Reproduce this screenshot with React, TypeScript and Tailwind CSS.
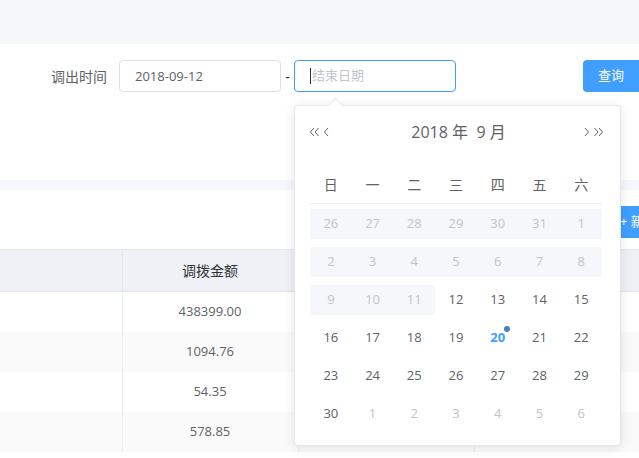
import React from "react";

const font = { fontFamily: '"Open Sans", "Noto Sans CJK SC", sans-serif' };

const weeks = ["日", "一", "二", "三", "四", "五", "六"];

type Day = { n: number; other?: boolean; past?: boolean; today?: boolean };

const days: Day[] = [
    ...[26, 27, 28, 29, 30, 31].map((n) => ({ n, other: true, past: true })),
    ...Array.from({ length: 30 }, (_, i) => ({
        n: i + 1,
        past: i + 1 < 12,
        today: i + 1 === 20,
    })),
    ...[1, 2, 3, 4, 5, 6].map((n) => ({ n, other: true })),
];

const rows = ["438399.00", "1094.76", "54.35", "578.85"];

const Chevron = ({ dir, double }: { dir: "l" | "r"; double?: boolean }) => (
    <svg width={double ? 11 : 7} height="10" viewBox={double ? "0 0 11 10" : "0 0 7 10"} className="text-[#606266]">
        <g fill="none" stroke="currentColor" strokeWidth="1" transform={dir === "r" ? `scale(-1,1) translate(-${double ? 11 : 7},0)` : undefined}>
            <path d="M5 1 L1.5 5 L5 9" />
            {double && <path d="M9.5 1 L6 5 L9.5 9" />}
        </g>
    </svg>
);

const DatePanel = () => (
    <div className="absolute left-[294px] top-[105px] w-[327px] h-[341px] rounded bg-white border border-[#e4e7ed] shadow-[0_2px_12px_0_rgba(0,0,0,0.1)]">
        <div className="absolute -top-[6px] left-[35px] w-[11px] h-[11px] rotate-45 bg-white border-l border-t border-[#e4e7ed]" />
        <div className="flex items-center justify-between pl-[14px] pr-[16px] h-[52px]">
            <div className="flex items-center gap-[3px]">
                <Chevron dir="l" double />
                <Chevron dir="l" />
            </div>
            <div className="text-[16px] text-[#606266] pl-[4px]">2018 年&nbsp;&nbsp;9 月</div>
            <div className="flex items-center gap-[3px]">
                <Chevron dir="r" />
                <Chevron dir="r" double />
            </div>
        </div>
        <div className="pl-[15px] w-[307px] pt-[11px]">
            <div className="grid grid-cols-7 h-[30px] items-center text-[14px] text-[#606266] border-b border-[#ebeef5] pb-[4px] box-content">
                {weeks.map((w) => (
                    <div key={w} className="text-center">{w}</div>
                ))}
            </div>
            <div className="grid grid-cols-7 gap-y-[8px] pt-[5px]">
                {days.map((d, i) => (
                    <div
                        key={i}
                        className={`h-[30px] flex items-center justify-center text-[13px] ${d.past ? "bg-[#f5f7fa]" : ""} ${d.other || d.past ? "text-[#c0c4cc]" : d.today ? "text-[#409eff] font-bold" : "text-[#606266]"}`}
                    >
                        <span className="relative">
                            {d.n}
                            {d.today && (
                                <span className="absolute -top-[2px] -right-[5px] w-[6px] h-[6px] rounded-full bg-[#4a7ec9]" />
                            )}
                        </span>
                    </div>
                ))}
            </div>
        </div>
    </div>
);

export default function App() {
    return (
        <div className="relative w-[639px] h-[458px] overflow-hidden bg-[#f5f7fa]" style={font}>
            <div className="h-[44px]" />
            <div className="bg-white h-[136px] pt-[16px]">
                <div className="flex items-center h-[32px]">
                    <label className="w-[107px] text-right text-[14px] text-[#606266]">调出时间</label>
                    <input
                        readOnly
                        value="2018-09-12"
                        className="ml-[12px] w-[162px] h-[32px] rounded border border-[#dcdfe6] px-[15px] text-[13px] text-[#606266] outline-none"
                    />
                    <span className="w-[13px] text-center text-[14px] text-[#303133]">-</span>
                    <div className="w-[162px] h-[32px] rounded border border-[#409eff] flex items-center pl-[15px] text-[13px] text-[#c0c4cc]">
                        <span className="w-px h-[16px] bg-[#303133] mr-[1px]" />
                        结束日期
                    </div>
                    <button className="ml-auto w-[56px] h-[32px] rounded-l bg-[#409eff] text-white text-[13px]">查询</button>
                </div>
            </div>
            <div className="h-[10px]" />
            <div className="bg-white h-[268px]">
                <div className="h-[59px] flex items-center justify-end pt-[4px]">
                    <button className="w-[21px] h-[32px] bg-[#409eff] text-white text-[13px] whitespace-nowrap overflow-hidden text-left pl-[2px]">+ 新增</button>
                </div>
                <table className="w-[660px] border-collapse table-fixed">
                    <colgroup>
                        <col className="w-[122px]" />
                        <col className="w-[176px]" />
                        <col className="w-[176px]" />
                        <col />
                    </colgroup>
                    <thead>
                        <tr className="h-[42px] bg-[#eff1f6] border-t border-b border-[#dfe6ec]">
                            <th className="border-r border-[#dfe6ec]" />
                            <th className="border-r border-[#dfe6ec] font-normal text-[14px] text-[#303133]">调拨金额</th>
                            <th className="border-r border-[#dfe6ec]" />
                            <th />
                        </tr>
                    </thead>
                    <tbody>
                        {rows.map((r, i) => (
                            <tr key={r} className={`h-[40px] ${i % 2 ? "bg-[#fafafa]" : "bg-white"}`}>
                                <td className="border-r border-[#ebeef5]" />
                                <td className="border-r border-[#ebeef5] text-center text-[13px] text-[#606266]">{r}</td>
                                <td className="border-r border-[#ebeef5]" />
                                <td />
                            </tr>
                        ))}
                    </tbody>
                </table>
            </div>
            <DatePanel />
        </div>
    );
}
